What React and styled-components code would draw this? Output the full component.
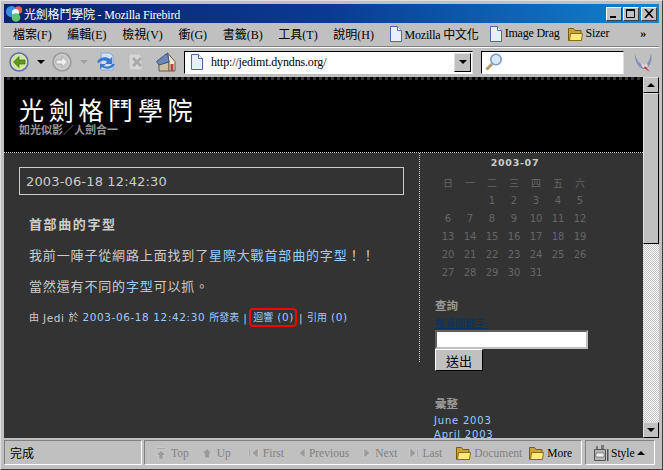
import React from "react";
import styled, { createGlobalStyle } from "styled-components";

const cjk = `"Liberation Serif", "Noto Sans CJK TC", serif`;
const web = `"DejaVu Sans", "Noto Sans CJK TC", sans-serif`;

const Global = createGlobalStyle`
    html, body { margin: 0; padding: 0; background: #bdbdbd; }
    * { box-sizing: border-box; }
`;

const Window = styled.div`
    width: 663px;
    height: 470px;
    display: flex;
    flex-direction: column;
    padding: 3px;
    background: #c0c0c0;
    border: 1px solid #404040;
    border-left-color: #dfdfdf;
    border-top-color: #dfdfdf;
    overflow: hidden;
    font-family: ${cjk};
    color: #000;
`;

const TitleBar = styled.div`
    height: 19px;
    flex: none;
    display: flex;
    align-items: center;
    padding: 0 2px;
    color: #fff;
    font-size: 12px;
    background: linear-gradient(90deg, #0a246a 0%, #0a3a94 50%, #1084d0 100%);
`;

const TitleText = styled.span`
    flex: 1;
    margin-left: 1px;
    white-space: nowrap;
    letter-spacing: -0.2px;
`;

const WinButton = styled.button`
    width: 16px;
    height: 14px;
    padding: 0;
    margin-left: ${p => p.$gap || 0}px;
    background: #c0c0c0;
    border: 1px solid;
    border-color: #fff #404040 #404040 #fff;
    display: flex;
    align-items: center;
    justify-content: center;
`;

const MenuBar = styled.div`
    height: 24px;
    flex: none;
    display: flex;
    align-items: center;
    padding: 0 0 2px 9px;
    font-size: 12px;
    border-bottom: 1px solid #808080;
    white-space: nowrap;
`;

const MenuItem = styled.span`
    margin-right: 15.6px;
`;

const Bookmark = styled.span`
    display: inline-flex;
    align-items: center;
    gap: 3px;
    margin-right: ${p => p.$gap}px;
    letter-spacing: -0.2px;
`;

const NavBar = styled.div`
    height: 30px;
    flex: none;
    display: flex;
    align-items: center;
    padding: 0 0 1px 4px;
    border-top: 1px solid #fff;
`;

const NavIcon = styled.span`
    display: flex;
    align-items: center;
    justify-content: center;
    flex: none;
    width: ${p => p.$w}px;
    margin-left: ${p => p.$left || 0}px;
`;

const UrlBox = styled.div`
    width: 289px;
    height: 23px;
    margin-left: 8px;
    flex: none;
    display: flex;
    align-items: center;
    padding-left: 6px;
    background: #fff;
    border: 1px solid;
    border-color: #000 #dfdfdf #fff #000;
    font-size: 12px;
    white-space: nowrap;
`;

const UrlText = styled.span`
    flex: 1;
    margin-left: 8px;
    letter-spacing: -0.15px;
`;

const DropButton = styled.span`
    width: 17px;
    height: 19px;
    margin-right: 1px;
    background: #c0c0c0;
    border: 1px solid;
    border-color: #dfdfdf #000 #000 #dfdfdf;
    display: flex;
    align-items: center;
    justify-content: center;
`;

const SearchBox = styled.div`
    width: 143px;
    height: 23px;
    margin-left: 8px;
    flex: none;
    display: flex;
    align-items: center;
    padding-left: 3px;
    background: #fff;
    border: 1px solid;
    border-color: #000 #dfdfdf #fff #000;
`;

const Viewport = styled.div`
    flex: 1;
    min-height: 0;
    display: flex;
`;

const Page = styled.div`
    flex: 1;
    min-width: 0;
    overflow: hidden;
    background: #333;
    border-top: 3px dotted #000;
    font-family: ${web};
    color: #ccc;
`;

const Banner = styled.header`
    height: 73px;
    background: #000;
    padding: 15px 15px 0;
    border-bottom: 1px dotted #ccc;
`;

const BannerTitle = styled.h1`
    margin: 0;
    font-size: 25px;
    line-height: 29px;
    font-weight: 400;
    letter-spacing: 4.7px;
    color: #fff;
    font-family: "Noto Sans CJK TC", sans-serif;
`;

const BannerTag = styled.div`
    margin-top: 1px;
    font-size: 11px;
    line-height: 12px;
    font-weight: 700;
    color: #999;
`;

const Columns = styled.div`
    display: flex;
    height: 300px;
`;

const Main = styled.main`
    width: 415px;
    flex: none;
    padding: 14px 15px 0;
`;

const DateBox = styled.div`
    height: 28px;
    display: flex;
    align-items: center;
    padding-left: 6px;
    border: 1px solid #ccc;
    font-size: 13px;
    letter-spacing: 0.15px;
`;

const Post = styled.article`
    padding: 21px 10px 0;
`;

const PostTitle = styled.h3`
    margin: 0;
    font-size: 13px;
    line-height: 18px;
    font-weight: 700;
    letter-spacing: 1.6px;
`;

const Para = styled.p`
    margin: 13px 0 0;
    font-size: 13px;
    line-height: 18px;
    letter-spacing: 0.85px;
    white-space: nowrap;
`;

const Link = styled.a`
    color: #99ccff;
`;

const Meta = styled.div`
    margin-top: 12px;
    font-size: 10.5px;
    line-height: 16px;
    letter-spacing: 0.6px;
    white-space: nowrap;
    display: flex;
    align-items: center;
`;

const MetaCjk = styled.span`
    font-size: 10px;
    letter-spacing: 0;
`;

const Circled = styled.span`
    border: 2px solid #f00;
    border-radius: 4px;
    padding: 0 1px 0 2px;
    margin: 0 2px 0 2px;
    line-height: 15px;
`;

const Side = styled.aside`
    flex: 1;
    padding: 0 15px;
`;

const Rule = styled.div`
    border-left: 1px dotted #ccc;
    height: 209px;
`;

const CalTitle = styled.div`
    margin-top: 3px;
    width: 160px;
    text-align: center;
    font-size: 9.5px;
    line-height: 14px;
    font-weight: 700;
    letter-spacing: 0.7px;
`;

const CalGrid = styled.div`
    margin: 3px 0 0 2px;
    width: 154px;
    display: grid;
    grid-template-columns: repeat(7, 22px);
    grid-auto-rows: 18px;
    justify-items: center;
    align-items: center;
    font-size: 10px;
    color: #666;
`;

const SideHead = styled.h4`
    margin: ${p => p.$top}px 0 0;
    font-size: 11.5px;
    line-height: 12px;
    font-weight: 700;
    color: #999;
`;

const SearchLabel = styled.div`
    margin-top: 6px;
    font-size: 10px;
    line-height: 12px;
    color: #003366;
    text-decoration: underline;
`;

const SearchInput = styled.div`
    width: 153px;
    height: 19px;
    background: #fff;
    border: 2px solid;
    border-color: #606060 #c0c0c0 #c0c0c0 #606060;
`;

const Submit = styled.button`
    display: block;
    width: 48px;
    height: 22px;
    padding: 0;
    background: #c0c0c0;
    border: 1px solid;
    border-color: #fff #000 #000 #fff;
    font-family: "Noto Sans CJK TC", sans-serif;
    font-size: 13px;
    color: #000;
`;

const ArchiveList = styled.div`
    margin: 4px 0 0 -1px;
`;

const ArchiveLink = styled.div`
    font-size: 10px;
    line-height: 14px;
    letter-spacing: 0.8px;
    color: #99ccff;
`;

const Scrollbar = styled.div`
    width: 16px;
    flex: none;
    display: flex;
    flex-direction: column;
    background: repeating-conic-gradient(#fff 0 25%, #c0c0c0 0 50%) 0 0 / 2px 2px;
`;

const ScrollButton = styled.div`
    height: 16px;
    flex: none;
    background: #c0c0c0;
    border: 1px solid;
    border-color: #dfdfdf #000 #000 #dfdfdf;
    display: flex;
    align-items: center;
    justify-content: center;
`;

const Thumb = styled.div`
    height: 151px;
    flex: none;
    background: #c0c0c0;
    border: 1px solid;
    border-color: #dfdfdf #000 #000 #dfdfdf;
`;

const Track = styled.div`
    flex: 1;
`;

const StatusBar = styled.div`
    height: 28px;
    flex: none;
    display: flex;
    align-items: stretch;
    padding: 2px 0 1px;
    font-size: 12px;
`;

const StatusCell = styled.div`
    width: ${p => (p.$w ? `${p.$w}px` : "auto")};
    flex: ${p => (p.$w ? "none" : 1)};
    display: flex;
    align-items: center;
    padding-left: ${p => p.$pad}px;
    margin-right: ${p => p.$mr}px;
    border: 1px solid;
    border-color: #808080 #fff #fff #808080;
    white-space: nowrap;
`;

const SiteItem = styled.span`
    display: inline-flex;
    align-items: center;
    gap: ${p => p.$inner || 3}px;
    margin-right: ${p => p.$gap || 0}px;
    font-size: 11.5px;
    color: ${p => (p.$on ? "#000" : "#808080")};
`;

const Tri = ({ dir = "down", color = "#000", size = 8 }) => (
    <svg width={size} height={size} viewBox="0 0 8 8">
        <path d={dir === "down" ? "M0 2h8L4 6z" : "M0 6h8L4 2z"} fill={color} />
    </svg>
);

const PageIcon = () => (
    <svg width="12" height="16" viewBox="0 0 12 16">
        <path d="M.5.5h7l4 4v11H.5z" fill="#e8eefc" stroke="#4a6aae" />
        <path d="M7.5.5v4h4" fill="#fff" stroke="#4a6aae" />
    </svg>
);

const Folder = () => (
    <svg width="15" height="14" viewBox="0 0 15 14">
        <path d="M.5 13.5v-12h5l1.5 2h6v10z" fill="#c9a33a" stroke="#7a5c10" />
        <path d="M1.5 13.5l1-7h12l-1 7z" fill="#ffe97f" stroke="#8d6c14" />
    </svg>
);

const SITE_ICONS = {
    top: "M1 1h10v1.5H1zM6 3.5l5 4.5H8v4H4V8H1z",
    up: "M6 1.5l5 5H8.5v4.5h-5V6.5H1z",
    first: "M1 1.5h1.5v9H1zM10 1v10L4 6z",
    prev: "M8 1v10L2 6z",
    next: "M1 1v10l6-5z",
    last: "M1 1v10l6-5zM8 1.5h1.5v9H8z",
};

const SiteIcon = ({ kind, w = 12 }) => (
    <svg width={w} height="12" viewBox={`0 0 ${w} 12`}>
        <path d={SITE_ICONS[kind]} fill="#9a9a9a" stroke="#e6e6e6" strokeWidth=".4" />
    </svg>
);

const Round = ({ on, flip }) => (
    <svg width="20" height="20" viewBox="0 0 20 20">
        <circle cx="10" cy="10" r="9" fill={on ? "#d6e4a8" : "#c9c9c9"} stroke={on ? "#5b6fa8" : "#9a9a9a"} strokeWidth="1.5" />
        <path
            d={flip ? "M4 8h6V4.500l5.500 5.500-5.500 5.500V12H4z" : "M16 8h-6V4.500L4.500 10l5.500 5.500V12h6z"}
            fill={on ? "#5d9a1e" : "#eee"}
            stroke={on ? "#3f6e10" : "#999"}
            strokeWidth=".7"
        />
    </svg>
);

const Logo = () => (
    <svg width="17" height="17" viewBox="0 0 17 17">
        <circle cx="5.5" cy="6.5" r="5.5" fill="#3b8fe0" />
        <circle cx="12.5" cy="5" r="3.8" fill="#e8604a" />
        <circle cx="9.5" cy="7.5" r="3.5" fill="#eef6fb" />
        <circle cx="10" cy="12.5" r="4.3" fill="#5fc46b" />
    </svg>
);

const Reload = () => (
    <svg width="20" height="20" viewBox="0 0 20 20">
        <path d="M5 1h9l3 3v14H5z" fill="#cfe0f7" stroke="#8aa6d8" />
        <path d="M1 10c2-5 9-6 13-3l2-2v7H9l2-2C9 8 5 8 3 11zM19 12c-2 5-9 6-13 3l-2 2v-5h6l-2 2c2 1 6 1 8-2z" fill="#3a78d0" />
    </svg>
);

const Stop = () => (
    <svg width="18" height="18" viewBox="0 0 18 18">
        <path d="M2 1h10l3 3v13H2z" fill="#d6d6d6" stroke="#bdbdbd" />
        <path d="M5 6l2-2 3 3 3-3 2 2-3 3 3 3-2 2-3-3-3 3-2-2 3-3z" fill="#a8a8a8" />
    </svg>
);

const Home = () => (
    <svg width="20" height="20" viewBox="0 0 20 20">
        <path d="M3 12l10-2v9H3z" fill="#cdbf9f" stroke="#6a5a44" />
        <path d="M13 10L11.500 1 19 9.500V19h-6z" fill="#efe6d0" stroke="#6a5a44" />
        <path d="M.5 9.500L11.500 1 13 10 3 13z" fill="#6b86b8" stroke="#3c5688" />
        <path d="M14.500 12h3v7h-3z" fill="#b0463c" />
    </svg>
);

const Lens = () => (
    <svg width="18" height="18" viewBox="0 0 18 18">
        <circle cx="11" cy="6.5" r="5.2" fill="#d8e8fa" stroke="#7a96c4" strokeWidth="1.5" />
        <path d="M7 11l-5.500 5.500" stroke="#b09a6a" strokeWidth="3" />
    </svg>
);

const Throbber = () => (
    <svg width="19" height="20" viewBox="0 0 19 20">
        <path d="M1 1C2 9 7 13 10 13c3 0 6-4 7-12 2 8-2 16-7 16C5 17 0 9 1 1z" fill="#7f8fb5" />
        <path d="M7 11l3 2 3-2 1 4-3 1-3-1z" fill="#e8d2d6" />
        <path d="M11 14l5 6-6-4z" fill="#d03030" />
    </svg>
);

const StyleIcon = () => (
    <svg width="16" height="18" viewBox="0 0 16 18">
        <path d="M1.5 5.500h11v11h-11z" fill="#b4b4b4" stroke="#555" />
        <path d="M3 2h2v3H3zM8 1h3v4H8z" fill="#777" />
        <path d="M3 9h8v4H3z" fill="#f0f0f0" stroke="#444" strokeWidth=".5" />
        <path d="M14 5h1.500v12H14z" fill="#555" />
    </svg>
);

const CAL_HEAD = ["日", "一", "二", "三", "四", "五", "六"];
const CAL_DAYS = [null, null, ...Array.from({ length: 31 }, (_, i) => i + 1)];
const MENUS = ["檔案(F)", "編輯(E)", "檢視(V)", "衝(G)", "書籤(B)", "工具(T)", "說明(H)"];

const App = () => (
    <Window>
        <Global />
        <TitleBar>
            <Logo />
            <TitleText>光劍格鬥學院 - Mozilla Firebird</TitleText>
            <WinButton>
                <svg width="10" height="9" viewBox="0 0 10 9"><path d="M1 7h6v2H1z" /></svg>
            </WinButton>
            <WinButton $gap={1}>
                <svg width="10" height="9" viewBox="0 0 10 9"><path d="M.5 1.500h8v7h-8z" fill="none" stroke="#000" /><path d="M0 0h9v2H0z" /></svg>
            </WinButton>
            <WinButton $gap={2}>
                <svg width="10" height="9" viewBox="0 0 10 9"><path d="M1 0l8 9M9 0L1 9" stroke="#000" strokeWidth="1.6" /></svg>
            </WinButton>
        </TitleBar>
        <MenuBar>
            {MENUS.map(m => <MenuItem key={m}>{m}</MenuItem>)}
            <Bookmark $gap={11}><PageIcon /> Mozilla 中文化</Bookmark>
            <Bookmark $gap={8}><PageIcon /> Image Drag</Bookmark>
            <Bookmark $gap={31}><Folder /> Sizer</Bookmark>
            <b>»</b>
        </MenuBar>
        <NavBar>
            <NavIcon $w={22}><Round on /></NavIcon>
            <NavIcon $w={22}><Tri /></NavIcon>
            <NavIcon $w={20}><Round flip /></NavIcon>
            <NavIcon $w={24}><Tri color="#a0a0a0" /></NavIcon>
            <NavIcon $w={20}><Reload /></NavIcon>
            <NavIcon $w={40}><Stop /></NavIcon>
            <NavIcon $w={20}><Home /></NavIcon>
            <UrlBox>
                <PageIcon />
                <UrlText>http://jedimt.dyndns.org/</UrlText>
                <DropButton><Tri /></DropButton>
            </UrlBox>
            <SearchBox><Lens /></SearchBox>
            <NavIcon $w={32} $left={3}><Throbber /></NavIcon>
        </NavBar>
        <Viewport>
            <Page>
                <Banner>
                    <BannerTitle>光劍格鬥學院</BannerTitle>
                    <BannerTag>如光似影／人劍合一</BannerTag>
                </Banner>
                <Columns>
                    <Main>
                        <DateBox>2003-06-18 12:42:30</DateBox>
                        <Post>
                            <PostTitle>首部曲的字型</PostTitle>
                            <Para>我前一陣子從網路上面找到了<Link>星際大戰首部曲的字型</Link>！！</Para>
                            <Para>當然還有不同的<Link>字型</Link>可以抓。</Para>
                            <Meta>
                                <MetaCjk>由</MetaCjk>&nbsp;Jedi&nbsp;<MetaCjk>於</MetaCjk>&nbsp;
                                <Link>2003-06-18 12:42:30 <MetaCjk>所發表</MetaCjk></Link>&nbsp;|
                                <Circled><Link><MetaCjk>迴響</MetaCjk> (0)</Link></Circled>|&nbsp;
                                <Link><MetaCjk>引用</MetaCjk> (0)</Link>
                            </Meta>
                        </Post>
                    </Main>
                    <Rule />
                    <Side>
                        <CalTitle>2003-07</CalTitle>
                        <CalGrid>
                            {CAL_HEAD.map(d => <span key={d}>{d}</span>)}
                            {CAL_DAYS.map((d, i) => <span key={i}>{d}</span>)}
                        </CalGrid>
                        <SideHead $top={19}>查詢</SideHead>
                        <SearchLabel>搜尋關鍵字:</SearchLabel>
                        <SearchInput />
                        <Submit>送出</Submit>
                        <SideHead $top={27}>彙整</SideHead>
                        <ArchiveList>
                            <ArchiveLink>June 2003</ArchiveLink>
                            <ArchiveLink>April 2003</ArchiveLink>
                        </ArchiveList>
                    </Side>
                </Columns>
            </Page>
            <Scrollbar>
                <ScrollButton><Tri dir="up" /></ScrollButton>
                <Thumb />
                <Track />
                <ScrollButton><Tri /></ScrollButton>
            </Scrollbar>
        </Viewport>
        <StatusBar>
            <StatusCell $w={138} $pad={5} $mr={2}>完成</StatusCell>
            <StatusCell $pad={10} $mr={3}>
                <SiteItem $gap={12} $inner={4}><SiteIcon kind="top" /> Top</SiteItem>
                <SiteItem $gap={17} $inner={4}><SiteIcon kind="up" /> Up</SiteItem>
                <SiteItem $gap={13}><SiteIcon kind="first" /> First</SiteItem>
                <SiteItem $gap={14}><SiteIcon kind="prev" w={9} /> Previous</SiteItem>
                <SiteItem $gap={11}><SiteIcon kind="next" w={9} /> Next</SiteItem>
                <SiteItem $gap={14} $inner={4}><SiteIcon kind="last" w={10} /> Last</SiteItem>
                <SiteItem $gap={7}><Folder /> Document</SiteItem>
                <SiteItem $on><Folder /> More</SiteItem>
            </StatusCell>
            <StatusCell $w={70} $pad={7} $mr={4}>
                <SiteItem $on $inner={2}><StyleIcon /> Style <Tri dir="up" /></SiteItem>
            </StatusCell>
        </StatusBar>
    </Window>
);

export default App;
